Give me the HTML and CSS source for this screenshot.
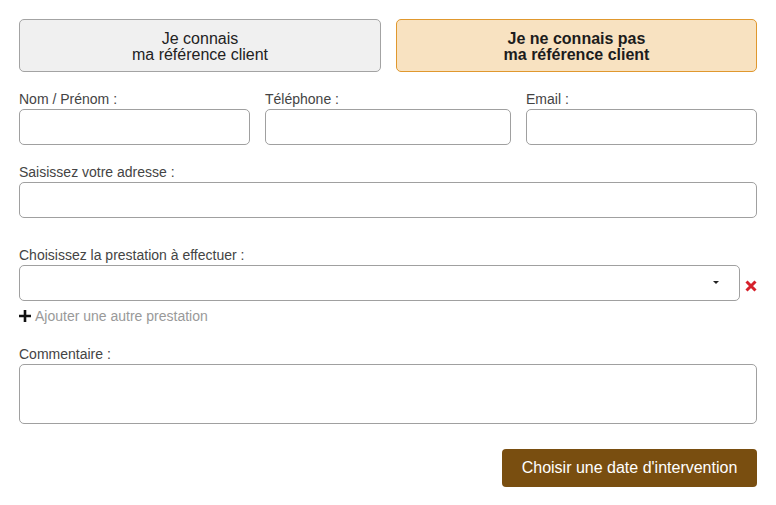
FILE: index.html
```html
<!DOCTYPE html>
<html lang="fr">
<head>
<meta charset="utf-8">
<title>Formulaire</title>
<link rel="stylesheet" href="styles.css">
</head>
<body>
<form class="form">
  <div class="choice-row">
    <button type="button" class="choice">Je connais<br>ma référence client</button>
    <button type="button" class="choice choice-active">Je ne connais pas<br>ma référence client</button>
  </div>

  <div class="row-3">
    <div class="field">
      <label class="label">Nom / Prénom :</label>
      <input class="input" type="text">
    </div>
    <div class="field">
      <label class="label">Téléphone :</label>
      <input class="input" type="text">
    </div>
    <div class="field">
      <label class="label">Email :</label>
      <input class="input" type="text">
    </div>
  </div>

  <div class="field">
    <label class="label">Saisissez votre adresse :</label>
    <input class="input" type="text">
  </div>

  <div class="field field-presta">
    <label class="label">Choisissez la prestation à effectuer :</label>
    <div class="select-row">
      <div class="select">
        <span class="caret"></span>
      </div>
      <span class="remove">
        <svg width="12" height="12" viewBox="0 0 12 12"><path d="M1.5 1.5 L10.5 10.5 M10.5 1.5 L1.5 10.5" stroke="#d6212b" stroke-width="3" stroke-linecap="butt"/></svg>
      </span>
    </div>
    <div class="add">
      <svg class="plus" width="12" height="12" viewBox="0 0 12 12"><path d="M6 0 V12 M0 6 H12" stroke="#111" stroke-width="2.6"/></svg>
      <span>Ajouter une autre prestation</span>
    </div>
  </div>

  <div class="field">
    <label class="label">Commentaire :</label>
    <textarea class="textarea"></textarea>
  </div>

  <div class="actions">
    <button type="button" class="submit">Choisir une date d'intervention</button>
  </div>
</form>
</body>
</html>
```

FILE: styles.css
```css
* { box-sizing: border-box; }
html, body { margin: 0; padding: 0; background: #fff; }
body {
  font-family: "Liberation Sans", Arial, Helvetica, sans-serif;
  color: #444;
}
.form {
  padding: 19px 19px 0 19px;
  width: 776px;
}
.choice-row {
  display: grid;
  grid-template-columns: 362px 361px;
  column-gap: 15px;
  margin-bottom: 18px;
}
.choice {
  height: 53px;
  border: 1px solid #a3a3a3;
  border-radius: 5px;
  background: #f0f0f0;
  font-family: inherit;
  font-size: 16px;
  line-height: 16px;
  color: #222;
  padding: 2px 0 0 0;
  text-align: center;
}
.choice-active {
  background: #f8e2c1;
  border-color: #e0982e;
  font-weight: bold;
  color: #1c1c1c;
}
.row-3 {
  display: grid;
  grid-template-columns: 231px 246px 231px;
  column-gap: 15px;
}
.field {
  display: flex;
  flex-direction: column;
  margin-bottom: 18px;
}
.label {
  font-size: 14px;
  line-height: 16px;
  padding-top: 1px;
  margin-bottom: 2px;
  color: #444;
}
.input {
  height: 36px;
  border: 1px solid #a0a0a0;
  border-radius: 5px;
  background: #fff;
  font-family: inherit;
  font-size: 14px;
  padding: 0 8px;
}
.field-presta {
  margin-top: 28px;
  margin-bottom: 21px;
}
.select-row {
  display: flex;
  align-items: center;
}
.select {
  flex: 1;
  height: 36px;
  border: 1px solid #a0a0a0;
  border-radius: 5px;
  background: #fff;
  display: flex;
  align-items: center;
  justify-content: flex-end;
  padding-right: 20px;
}
.caret {
  width: 0;
  height: 0;
  border-left: 3px solid transparent;
  border-right: 3px solid transparent;
  border-top: 3px solid #222;
  margin-top: -2px;
}
.remove {
  width: 17px;
  display: flex;
  justify-content: flex-end;
  align-items: center;
  padding-top: 5px;
}
.add {
  display: flex;
  align-items: center;
  gap: 4px;
  margin-top: 7px;
  font-size: 14px;
  line-height: 16px;
  color: #999;
}
.plus { flex: none; }
.textarea {
  height: 60px;
  border: 1px solid #a0a0a0;
  border-radius: 5px;
  resize: none;
  font-family: inherit;
  font-size: 14px;
  padding: 6px 8px;
  display: block;
}
.actions {
  display: flex;
  justify-content: flex-end;
  margin-top: 25px;
}
.submit {
  width: 255px;
  height: 38px;
  background: #794e10;
  color: #fff;
  border: none;
  border-radius: 4px;
  font-family: inherit;
  font-size: 16px;
  padding: 0;
}
```
